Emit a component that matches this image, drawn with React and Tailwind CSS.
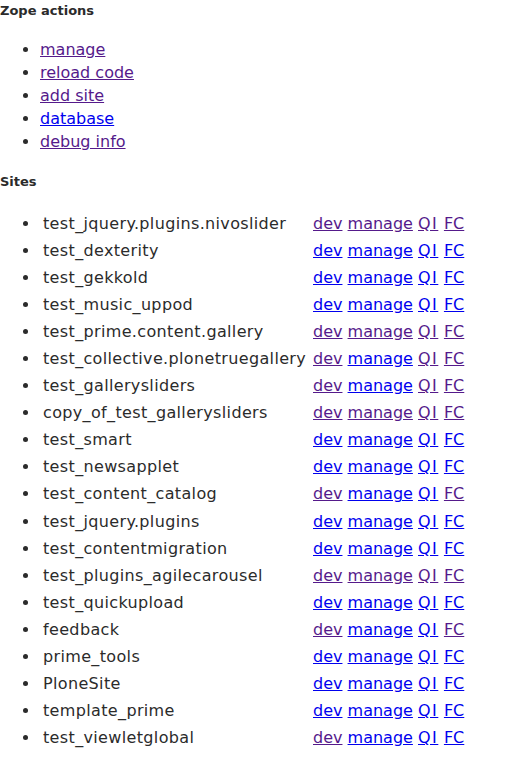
const P = "p";
const B = "b";

// dev, manage, QI, FC — which ones show as visited
const SITES = [
    ["test_jquery.plugins.nivoslider", [P, P, P, P]],
    ["test_dexterity", [B, B, B, B]],
    ["test_gekkold", [B, B, B, B]],
    ["test_music_uppod", [B, B, B, B]],
    ["test_prime.content.gallery", [P, P, P, P]],
    ["test_collective.plonetruegallery", [P, B, P, P]],
    ["test_gallerysliders", [P, B, P, P]],
    ["copy_of_test_gallerysliders", [P, P, P, P]],
    ["test_smart", [B, B, B, B]],
    ["test_newsapplet", [B, B, B, B]],
    ["test_content_catalog", [P, B, B, P]],
    ["test_jquery.plugins", [B, B, B, B]],
    ["test_contentmigration", [B, B, B, B]],
    ["test_plugins_agilecarousel", [P, P, P, P]],
    ["test_quickupload", [B, B, B, B]],
    ["feedback", [P, B, B, P]],
    ["prime_tools", [B, B, B, B]],
    ["PloneSite", [B, B, B, B]],
    ["template_prime", [B, B, B, B]],
    ["test_viewletglobal", [P, B, B, B]],
];

const ACTIONS = [
    ["manage", P],
    ["reload code", P],
    ["add site", P],
    ["database", B],
    ["debug info", P],
];

function Link({ label, state, className = "" }) {
    return (
        <a href="#" className={`underline ${state === P ? "text-[#551a8b]" : "text-[#0000ee]"} ${className}`}>
            {label}
        </a>
    );
}

export default function App() {
    return (
        <div className="min-h-[770px] bg-white text-[#2b2b2b] font-['Verdana','DejaVu_Sans',sans-serif]">
            <h4 className="pt-[3px] text-[13px] leading-[16px] font-bold">Zope actions</h4>

            <ul className="list-disc pl-10 mt-[19px] text-[16px] leading-[23px]">
                {ACTIONS.map(([label, state]) => (
                    <li key={label}><Link label={label} state={state} /></li>
                ))}
            </ul>

            <h4 className="mt-[21px] text-[13px] leading-[16px] font-bold">Sites</h4>

            <ul className="list-disc pl-10 mt-[19.5px] text-[16px]">
                {SITES.map(([name, states]) => (
                    <li key={name} className="h-[27.1px] leading-[27.1px] whitespace-nowrap">
                        <span className="inline-block w-[273px] pl-[3px] tracking-[0.35px]">{name}</span>
                        <Link label="dev" state={states[0]} />{" "}
                        <Link label="manage" state={states[1]} />{" "}
                        <Link label="QI" state={states[2]} className="tracking-[1.5px] pr-[0.5px]" />{" "}
                        <Link label="FC" state={states[3]} />
                    </li>
                ))}
            </ul>
        </div>
    );
}
